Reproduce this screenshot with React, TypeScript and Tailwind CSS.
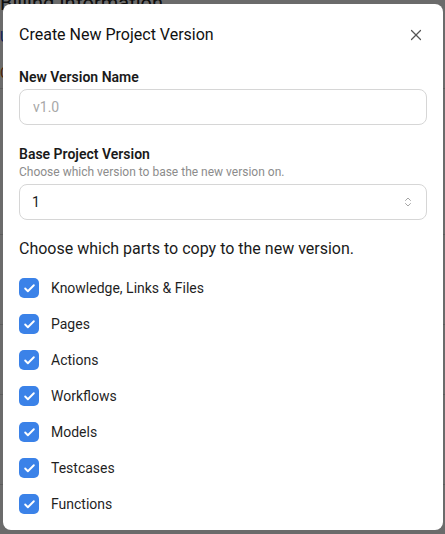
import { Check, ChevronsUpDown, X } from "lucide-react";

const parts = ["Knowledge, Links & Files", "Pages", "Actions", "Workflows", "Models", "Testcases", "Functions"];

function BackgroundPage() {
  return (
    <div className="h-full w-full bg-white">
      <p className="-mt-[9px] text-[20px] leading-[24px] text-[#222]">Billing Information</p>
      <div className="mt-[8px] flex flex-col">
        <div className="h-[66px] border-b border-[#ddd] text-[14px] leading-[20px] text-[#1d4ed8]">
          <p className="pt-[4px]">Upgrade plan</p>
          <p className="pt-[16px] text-[#b45309]">Current plan</p>
        </div>
        <div className="h-[146px] border-b border-[#ddd]" />
        <div className="h-[90px] border-b border-[#ddd]" />
        <div className="h-[70px] border-b border-[#ddd]" />
        <div className="h-[90px] border-b border-[#ddd]" />
      </div>
    </div>
  );
}

function PartCheckbox({ label }: { label: string }) {
  return (
    <label className="flex items-center gap-3">
      <span className="flex h-5 w-5 items-center justify-center rounded-[5px] bg-[#3b82e8]">
        <Check className="h-[13px] w-[13px] text-white" strokeWidth={3.5} />
      </span>
      <span className="text-[14px] leading-5 text-[#1f1f1f]">{label}</span>
    </label>
  );
}

export default function App() {
  return (
    <div className="relative h-[534px] w-[445px] overflow-hidden font-['Roboto',sans-serif]">
      <BackgroundPage />
      <div className="absolute inset-0 bg-black/[.58]" />

      <div className="absolute left-[3px] top-[4px] h-[526px] w-[440px] rounded-lg bg-white px-4 pt-[19px]">
        <div className="flex items-center justify-between">
          <h2 className="text-[16px] leading-6 text-[#111]">Create New Project Version</h2>
          <button className="mr-[2px] text-[#555]">
            <X className="h-[18px] w-[18px]" strokeWidth={1.6} />
          </button>
        </div>

        <div className="mt-[20px]">
          <p className="text-[14px] font-semibold leading-5 text-[#1a1a1a]">New Version Name</p>
          <input
            placeholder="v1.0"
            className="mt-[2px] h-9 w-full rounded-lg border border-[#d6d6d6] px-[13px] text-[14px] placeholder:text-[#a8a8a8] outline-none"
          />
        </div>

        <div className="mt-[19px]">
          <p className="text-[14px] font-semibold leading-5 text-[#1a1a1a]">Base Project Version</p>
          <p className="text-[12px] leading-4 text-[#8c8c8c]">Choose which version to base the new version on.</p>
          <div className="mt-1 flex h-9 w-full items-center justify-between rounded-lg border border-[#d6d6d6] pl-[12px] pr-[12px]">
            <span className="text-[14px] text-[#1a1a1a]">1</span>
            <ChevronsUpDown className="h-3 w-3 text-[#888]" strokeWidth={1.5} />
          </div>
        </div>

        <p className="mt-[17px] text-[16px] leading-6 text-[#1a1a1a]">Choose which parts to copy to the new version.</p>

        <div className="mt-[17px] flex flex-col gap-4">
          {parts.map((part) => (
            <PartCheckbox key={part} label={part} />
          ))}
        </div>
      </div>
    </div>
  );
}
